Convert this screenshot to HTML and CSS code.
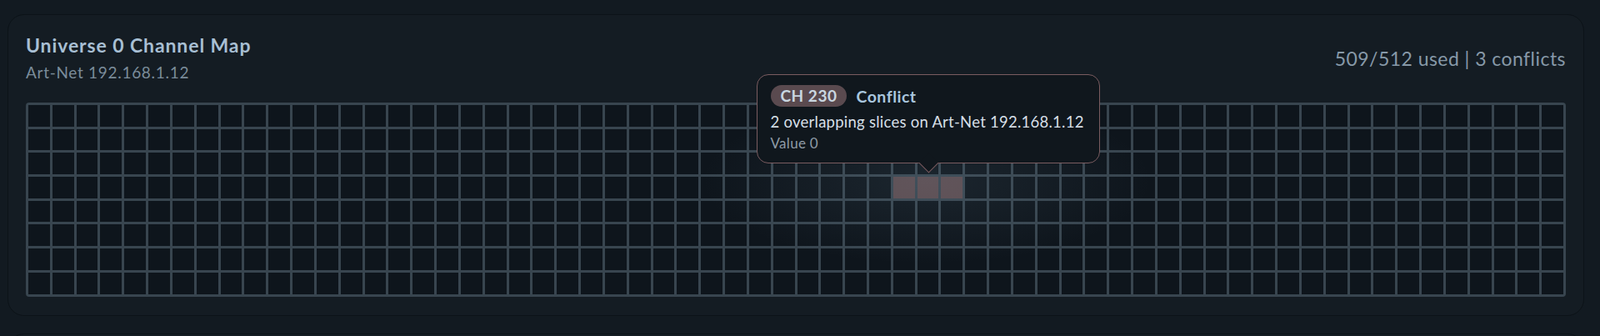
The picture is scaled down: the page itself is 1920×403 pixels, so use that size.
FILE: index.html
```html
<!DOCTYPE html>
<html lang="en">
<head>
  <meta charset="UTF-8">
  <meta name="viewport" content="width=device-width, initial-scale=1.0">
  <title>Universe 0 Channel Map</title>
  <link rel="stylesheet" href="styles.css">
</head>
<body>
  <div class="panel">
    <div class="panel-head">
      <div>
        <h2 class="panel-title">Universe 0 Channel Map</h2>
        <div class="panel-sub">Art-Net 192.168.1.12</div>
      </div>
      <div class="usage">509/512 used | 3 conflicts</div>
    </div>

    <div class="map-wrap">
      <div class="channel-grid" id="channelGrid"></div>
      <div class="hover-glow"></div>
    </div>
  </div>

  <div class="panel panel-next"></div>

  <script>
    // 512 DMX slots, 64 per row; 229-231 are claimed twice
    let conflicts = [229, 230, 231];
    let hovered = 230;
    let grid = document.getElementById("channelGrid");

    for (let ch = 1; ch <= 512; ch++) {
      let cell = document.createElement("div");
      cell.classList.add("cell");
      if (conflicts.includes(ch)) cell.classList.add("conflict");

      if (ch === hovered) {
        cell.classList.add("hovered");
        cell.innerHTML = `
          <div class="tip">
            <div class="tip-head"><span class="tip-badge">CH ${ch}</span><span class="tip-kind">Conflict</span></div>
            <div class="tip-body">2 overlapping slices on Art-Net 192.168.1.12</div>
            <div class="tip-value">Value 0</div>
          </div>`;
      }
      grid.appendChild(cell);
    }
  </script>
</body>
</html>
```

FILE: styles.css
```css
body {
  margin: 0;
  padding: 17px 19px 0 9px;
  background-color: #121a21;
  font-family: Lato, "Noto Sans", sans-serif;
  overflow: hidden;
}
.panel {
  background: #141c23;
  border: 1px solid #0c1318;
  border-radius: 20px;
  padding: 21px 21px 22px;
}
.panel-next {
  margin-top: 21px;
  height: 20px;
}
.panel-head {
  display: flex;
  justify-content: space-between;
  align-items: center;
  margin-bottom: 22px;
}
.panel-title {
  margin: 0;
  font-size: 23px;
  line-height: 30px;
  font-weight: 700;
  letter-spacing: 0.9px;
  color: #a8bfd3;
}
.panel-sub {
  margin-top: 4px;
  font-size: 19px;
  line-height: 28px;
  letter-spacing: 0.7px;
  color: #7b8c9a;
}
.usage {
  font-size: 23px;
  letter-spacing: 0.45px;
  color: #8799a8;
}

.map-wrap { position: relative; }
.channel-grid {
  display: grid;
  grid-template-columns: repeat(64, 1fr);
  grid-auto-rows: 25.7px;
  gap: 3px;
  padding: 3px;
  background: #38454f;
  border-radius: 4px;
}
.cell { background: #0e151c; }
.cell.conflict { background: #5d4b4f; }
.cell.hovered { position: relative; }

.hover-glow {
  position: absolute;
  inset: 0;
  pointer-events: none;
  background: radial-gradient(ellipse 270px 100px at 58.5% 40%, rgba(120, 150, 170, 0.13), rgba(120, 150, 170, 0) 100%);
  z-index: 1;
}

.tip {
  position: absolute;
  left: 50%;
  bottom: calc(100% + 16px);
  transform: translateX(-50%);
  width: 412px;
  box-sizing: border-box;
  padding: 12px 16px 12px;
  background: #10171d;
  border: 1px solid #7a5c60;
  border-radius: 14px;
  z-index: 2;
}
.tip::after {
  content: "";
  position: absolute;
  left: 50%;
  bottom: -9px;
  width: 16px;
  height: 16px;
  margin-left: -8px;
  background: #10171d;
  border-right: 1px solid #7a5c60;
  border-bottom: 1px solid #7a5c60;
  transform: rotate(45deg);
}
.tip-head {
  display: flex;
  align-items: center;
  gap: 11px;
}
.tip-badge {
  background: #5a4a4f;
  color: #c9d6e1;
  font-weight: 700;
  font-size: 19px;
  line-height: 26px;
  letter-spacing: 0.5px;
  padding: 0 12px;
  border-radius: 13px;
}
.tip-kind {
  color: #a9c6dd;
  font-weight: 700;
  font-size: 19.5px;
  letter-spacing: 0.5px;
}
.tip-body {
  margin-top: 6px;
  font-size: 18.5px;
  line-height: 24px;
  letter-spacing: 0.25px;
  color: #d6dfe6;
  white-space: nowrap;
}
.tip-value {
  margin-top: 3px;
  font-size: 17px;
  line-height: 22px;
  letter-spacing: 0.3px;
  color: #8e9ba6;
}
```
